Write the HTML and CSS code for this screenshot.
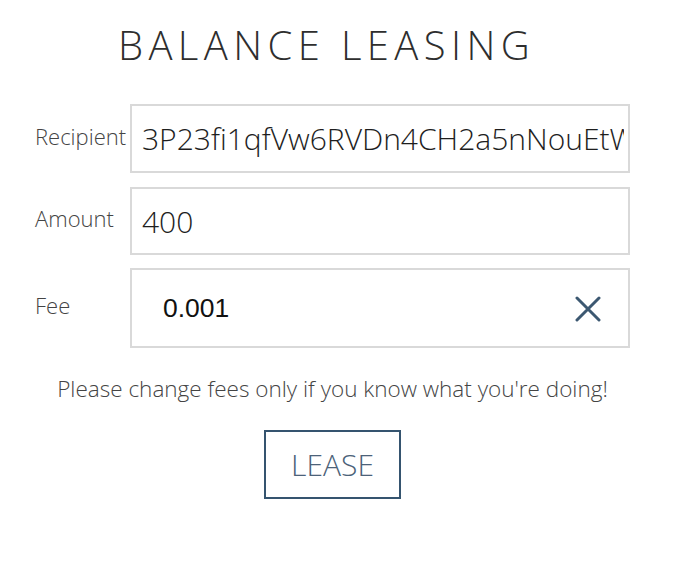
FILE: index.html
```html
<!DOCTYPE html>
<html lang="en">
<head>
<meta charset="utf-8">
<title>Balance Leasing</title>
<link rel="stylesheet" href="styles.css">
</head>
<body>
<div class="page">
  <h1 class="title">BALANCE LEASING</h1>
  <form class="form">
    <div class="row row-recipient">
      <label class="label" for="recipient">Recipient</label>
      <input class="field" id="recipient" type="text" value="3P23fi1qfVw6RVDn4CH2a5nNouEtWLQ4THs">
    </div>
    <div class="row row-amount">
      <label class="label" for="amount">Amount</label>
      <input class="field" id="amount" type="text" value="400">
    </div>
    <div class="row row-fee">
      <label class="label" for="fee">Fee</label>
      <div class="fee-box">
        <input class="fee-input" id="fee" type="text" value="0.001">
        <span class="clear" aria-label="clear">
          <svg width="26" height="26" viewBox="0 0 26 26"><path d="M2 2 L24 24 M24 2 L2 24" stroke="#3c5871" stroke-width="3" stroke-linecap="round" fill="none"/></svg>
        </span>
      </div>
    </div>
    <p class="note">Please change fees only if you know what you're doing!</p>
    <div class="actions">
      <button class="lease" type="button">LEASE</button>
    </div>
  </form>
</div>
</body>
</html>
```
FILE: styles.css
```css
html, body {
  margin: 0;
  padding: 0;
  background: #ffffff;
}
body {
  font-family: "Open Sans", "Liberation Sans", sans-serif;
  font-weight: 300;
  color: #333;
}
.page {
  width: 665px;
  box-sizing: border-box;
  padding: 0 35px;
}
.title {
  margin: 21px 0 0 0;
  padding-right: 12px;
  font-size: 40px;
  line-height: 48px;
  font-weight: 300;
  letter-spacing: 5.4px;
  text-align: center;
  color: #2e2e2e;
}
.form {
  margin: 35px 0 0 0;
  display: flex;
  flex-direction: column;
}
.row {
  display: flex;
  align-items: center;
}
.row + .row {
  margin-top: 14px;
}
.row-fee {
  margin-top: 13px !important;
}
.label {
  width: 95px;
  flex: none;
  font-size: 22px;
  line-height: 28px;
  color: #444;
  margin-top: -6px;
  white-space: nowrap;
}
.field {
  box-sizing: border-box;
  width: 500px;
  height: 69px;
  border: 2px solid #d9d9d9;
  border-radius: 0;
  padding: 0 4px 0 10px;
  margin: 0;
  font-family: "Open Sans", "Liberation Sans", sans-serif;
  font-weight: 300;
  font-size: 30px;
  color: #1e1e1e;
  background: #fff;
  outline: none;
}
.row-amount .field {
  height: 68px;
}
.fee-box {
  box-sizing: border-box;
  width: 500px;
  height: 80px;
  border: 2px solid #d9d9d9;
  display: flex;
  align-items: center;
  padding: 0 27px 0 31px;
}
.fee-input {
  flex: 1;
  min-width: 0;
  border: 0;
  padding: 0;
  margin: 0;
  font-family: "Liberation Sans", Arial, sans-serif;
  font-weight: 400;
  font-size: 26.5px;
  color: #111;
  background: transparent;
  outline: none;
}
.clear {
  display: flex;
  width: 26px;
  height: 26px;
  margin-top: 1px;
}
.note {
  margin: 27px 0 0 0;
  text-align: center;
  font-size: 22.5px;
  line-height: 28px;
  color: #444;
}
.actions {
  display: flex;
  justify-content: center;
  margin-top: 27px;
}
.lease {
  box-sizing: border-box;
  width: 137px;
  height: 69px;
  border: 2px solid #35546f;
  background: #fff;
  border-radius: 0;
  font-family: "Open Sans", "Liberation Sans", sans-serif;
  font-weight: 300;
  font-size: 30px;
  color: #4c6279;
  padding: 0;
  cursor: pointer;
}
```
